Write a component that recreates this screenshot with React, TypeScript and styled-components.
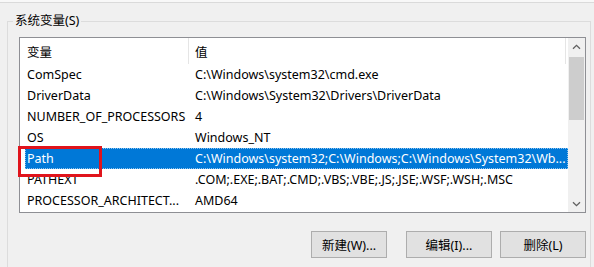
import React from 'react';
import styled, { createGlobalStyle } from 'styled-components';

const GlobalStyle = createGlobalStyle`
  body {
    margin: 0;
    background: #f0f0f0;
    font-family: "Noto Sans", "Noto Sans CJK SC", sans-serif;
    font-size: 12.5px;
    color: #000;
  }
`;

interface EnvVar {
  name: string;
  value: string;
}

const vars: EnvVar[] = [
  { name: 'ComSpec', value: 'C:\\Windows\\system32\\cmd.exe' },
  { name: 'DriverData', value: 'C:\\Windows\\System32\\Drivers\\DriverData' },
  { name: 'NUMBER_OF_PROCESSORS', value: '4' },
  { name: 'OS', value: 'Windows_NT' },
  {
    name: 'Path',
    value: 'C:\\Windows\\system32;C:\\Windows;C:\\Windows\\System32\\Wb...',
  },
  { name: 'PATHEXT', value: '.COM;.EXE;.BAT;.CMD;.VBS;.VBE;.JS;.JSE;.WSF;.WSH;.MSC' },
  { name: 'PROCESSOR_ARCHITECT...', value: 'AMD64' },
];

const SELECTED = 'Path';

const Chevron = ({ down }: { down?: boolean }) => (
  <svg width="9" height="6" viewBox="0 0 9 6">
    <path
      d={down ? 'M1 1.2 L4.5 4.7 L8 1.2' : 'M1 4.8 L4.5 1.3 L8 4.8'}
      fill="none"
      stroke="#606060"
      strokeWidth="1.3"
    />
  </svg>
);

/** 系统变量 */
const App = () => {
  return (
    <>
      <GlobalStyle />
      <TopEdge />
      <GroupBox>
        <Legend>系统变量(S)</Legend>
        <ListBox>
          <ListContent>
            <Header>
              <HeaderCell $width={169} $pad={7}>
                变量
              </HeaderCell>
              <HeaderCell $width={377} $pad={6}>
                值
              </HeaderCell>
            </Header>
            {vars.map((v) => (
              <Row key={v.name} $selected={v.name === SELECTED}>
                <Cell $width={168}>{v.name}</Cell>
                <Cell>{v.value}</Cell>
              </Row>
            ))}
          </ListContent>
          <ScrollBar>
            <ArrowButton>
              <Chevron />
            </ArrowButton>
            <Track>
              <Thumb />
            </Track>
            <ArrowButton>
              <Chevron down />
            </ArrowButton>
          </ScrollBar>
          <Highlight />
        </ListBox>
        <ButtonRow>
          <Button $width={76}>新建(W)...</Button>
          <Button $width={86} $gap={19}>
            编辑(I)...
          </Button>
          <Button $width={86} $gap={8}>
            删除(L)
          </Button>
        </ButtonRow>
      </GroupBox>
    </>
  );
};

const TopEdge = styled.div`
  height: 2px;
  background: #f8f8f8;
  border-bottom: 1px solid #dadada;
`;

const GroupBox = styled.fieldset`
  box-sizing: border-box;
  width: 584px;
  margin: 10px 0 0 7px;
  padding: 8px 0 9px 11px;
  border: 1px solid #dcdcdc;
  border-bottom: none;
  min-inline-size: 0;
`;

const Legend = styled.legend`
  margin-left: -6px;
  padding: 0 2px;
  line-height: 16px;
`;

const ListBox = styled.div`
  position: relative;
  box-sizing: border-box;
  width: 567px;
  height: 176px;
  border: 1px solid #8e8f94;
  background: #fff;
  display: flex;
`;

const ListContent = styled.div`
  flex: 1;
  display: flex;
  flex-direction: column;
  overflow: hidden;
`;

const Header = styled.div`
  height: 26px;
  display: flex;
  flex-shrink: 0;
`;

const HeaderCell = styled.div<{ $width: number; $pad: number }>`
  box-sizing: border-box;
  width: ${(p) => p.$width}px;
  padding-left: ${(p) => p.$pad}px;
  border-right: 1px solid #e5e5e5;
  display: flex;
  align-items: center;
`;

const Row = styled.div<{ $selected?: boolean }>`
  height: 21px;
  margin-left: 5px;
  display: flex;
  align-items: center;
  flex-shrink: 0;
  background: ${(p) => (p.$selected ? '#0078d7' : 'transparent')};
  color: ${(p) => (p.$selected ? '#fff' : '#000')};
  outline: ${(p) => (p.$selected ? '1px dotted #8cc4f0' : 'none')};
  outline-offset: -1px;
`;

const Cell = styled.div<{ $width?: number }>`
  box-sizing: border-box;
  width: ${(p) => (p.$width ? `${p.$width}px` : 'auto')};
  flex: ${(p) => (p.$width ? 'none' : '1')};
  padding-left: 2px;
  white-space: nowrap;
  overflow: hidden;
`;

const ScrollBar = styled.div`
  width: 17px;
  display: flex;
  flex-direction: column;
  background: #f0f0f0;
`;

const ArrowButton = styled.div`
  height: 17px;
  display: flex;
  align-items: center;
  justify-content: center;
`;

const Track = styled.div`
  flex: 1;
  padding: 2px 1px 0;
`;

const Thumb = styled.div`
  height: 63px;
  background: #cdcdcd;
`;

const Highlight = styled.div`
  position: absolute;
  left: -2px;
  top: 108px;
  width: 84px;
  height: 31px;
  box-sizing: border-box;
  border: 3px solid #e0141c;
  pointer-events: none;
`;

const ButtonRow = styled.div`
  width: 567px;
  margin-top: 18px;
  display: flex;
  justify-content: flex-end;
`;

const Button = styled.button<{ $width: number; $gap?: number }>`
  box-sizing: border-box;
  width: ${(p) => p.$width}px;
  height: 27px;
  margin-left: ${(p) => p.$gap ?? 0}px;
  padding: 0;
  border: 1px solid #adadad;
  background: #e1e1e1;
  font: inherit;
  color: #000;
`;

export default App;
